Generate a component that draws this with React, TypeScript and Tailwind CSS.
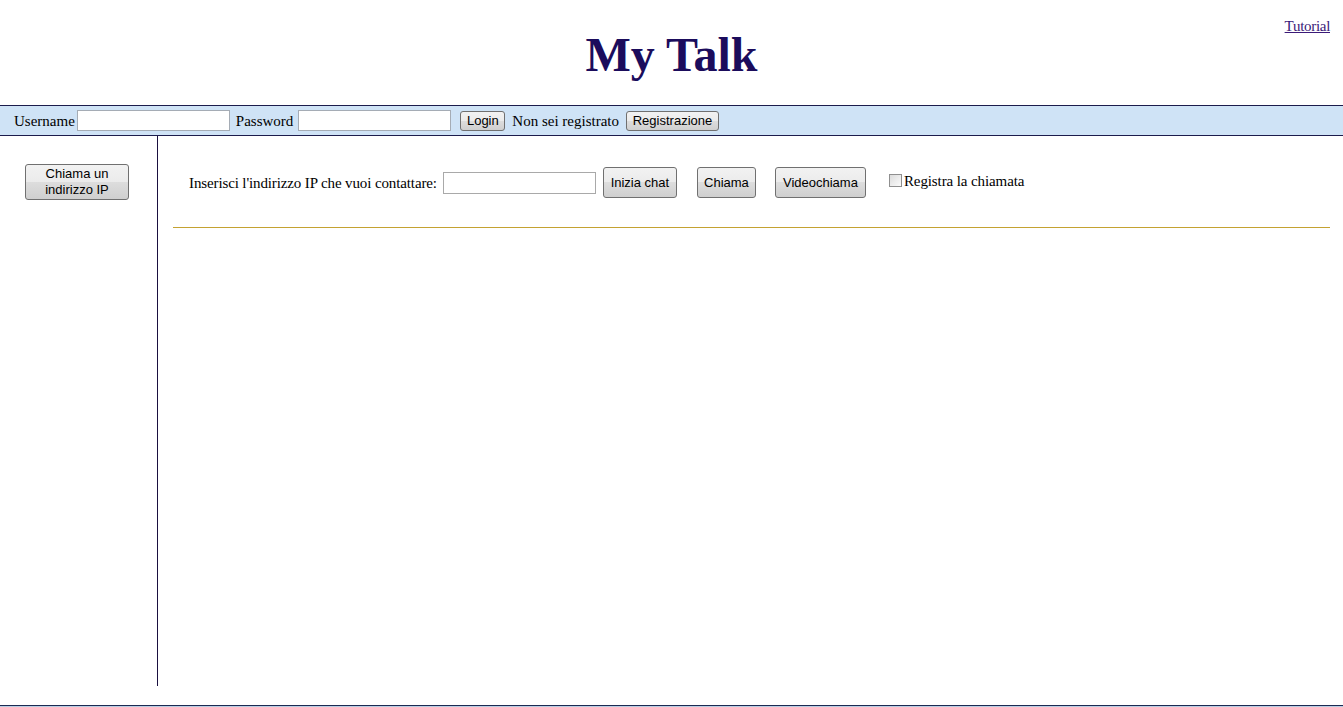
import React from "react";

const btn =
  "border border-[#707070] rounded-[3px] bg-[linear-gradient(#f2f2f2_0%,#ebebeb_50%,#dddddd_50%,#cfcfcf_100%)] text-[13px] text-black font-['Liberation_Sans',Arial,sans-serif] leading-[15px]";

export default function App() {
  return (
    <div className="w-[1343px] h-[707px] overflow-hidden bg-white relative font-['Liberation_Serif','Times_New_Roman',serif] text-black">
      <div className="h-[105px] relative">
        <h1 className="pt-[27px] text-center text-[48px] leading-[55px] font-bold text-[#1b0c5c]">
          My Talk
        </h1>
        <a className="absolute right-[13px] top-[18px] text-[15px] leading-[17px] underline text-[#3b1a78] tracking-[-0.3px]" href="#">
          Tutorial
        </a>
      </div>
      <div className="h-[31px] border-y border-[#1c1c4c] bg-[#cfe3f6] flex items-center pl-[14px] text-[15px] leading-[17px]">
        <span className="mt-[2px]">Username</span>
        <input className="ml-[2px] w-[153px] h-[21px] border border-[#a5acb5] bg-white" />
        <span className="ml-[6px] mt-[2px]">Password</span>
        <input className="ml-[5px] w-[153px] h-[21px] border border-[#a5acb5] bg-white" />
        <button className={`${btn} ml-[9px] h-[20px] w-[45px]`}>Login</button>
        <span className="ml-[7px] mt-[2px]">Non sei registrato</span>
        <button className={`${btn} ml-[7px] h-[20px] w-[93px]`}>Registrazione</button>
      </div>
      <div className="flex h-[550px]">
        <div className="w-[158px] border-r border-[#1a1040] pt-[28px] pl-[25px]">
          <button className={`${btn} w-[104px] h-[36px] leading-[16px]`}>
            Chiama un
            <br />
            indirizzo IP
          </button>
        </div>
        <div className="flex-1 pl-[15px] pr-[13px]">
          <div className="pt-[31px] pl-[16px] flex items-center h-[62px] text-[15px] leading-[17px]">
            <span className="mt-[1px] tracking-[-0.12px]">Inserisci l'indirizzo IP che vuoi contattare:</span>
            <input className="ml-[6px] w-[153px] h-[22px] border border-[#a9a9a9] bg-white" />
            <button className={`${btn} ml-[7px] h-[31px] w-[74px]`}>Inizia chat</button>
            <button className={`${btn} ml-[20px] h-[31px] w-[59px]`}>Chiama</button>
            <button className={`${btn} ml-[19px] h-[31px] w-[91px]`}>Videochiama</button>
            <span className="ml-[23px] mb-[4px] w-[13px] h-[13px] border border-[#8f8f8f] bg-[linear-gradient(135deg,#dcdcdc,#fbfbfb)] inline-block" />
            <span className="ml-[2px] mb-[2px] tracking-[-0.1px]">Registra la chiamata</span>
          </div>
          <div className="mt-[29px] border-t border-[#c4a232]" />
        </div>
      </div>
      <div className="h-[19px]" />
      <div className="h-[2px] border-t border-[#1c2a52] bg-[#b8cde2]" />
    </div>
  );
}
